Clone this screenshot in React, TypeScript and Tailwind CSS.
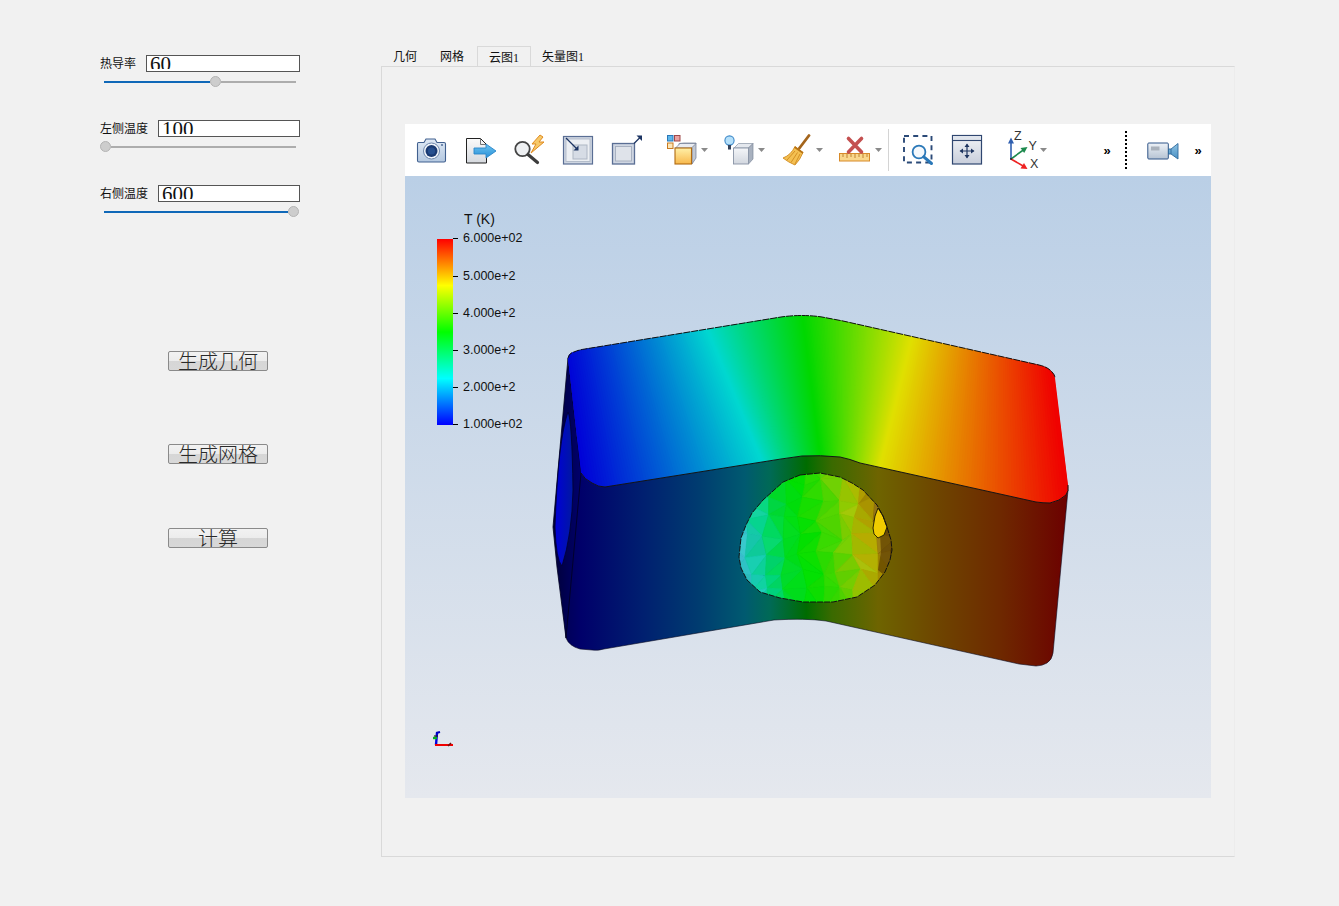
import React from "react";

const lerp = (a: number, b: number, t: number) => a + (b - a) * t;
type C = [number, number, number];
const ramp = (stops: [number, C][], t: number): string => {
  const v = Math.max(stops[0][0], Math.min(stops[stops.length - 1][0], t));
  for (let i = 0; i < stops.length - 1; i++) {
    const [a, ca] = stops[i];
    const [b, cb] = stops[i + 1];
    if (v <= b) {
      const k = (v - a) / (b - a);
      return `rgb(${Math.round(lerp(ca[0], cb[0], k))},${Math.round(lerp(ca[1], cb[1], k))},${Math.round(lerp(ca[2], cb[2], k))})`;
    }
  }
  return "rgb(0,0,0)";
};

const topStops: [number, C][] = [
  [0, [0, 0, 216]],
  [0.25, [0, 216, 208]],
  [0.5, [0, 216, 0]],
  [0.75, [224, 224, 0]],
  [1, [240, 0, 0]],
];
const isoAnchors: [number, number, number][] = [
  [0, 558, 587],
  [0.25, 699, 782],
  [0.5, 802, 827],
  [0.75, 919, 869],
  [1, 1044, 1069],
];
const topStrips = () => {
  const out: { pts: string; fill: string }[] = [];
  for (let s = 0; s < 4; s++) {
    const [t0, a0, b0] = isoAnchors[s];
    const [t1, a1, b1] = isoAnchors[s + 1];
    const n = 70;
    for (let i = 0; i < n; i++) {
      const k0 = i / n;
      const k1 = (i + 1) / n;
      const x0 = lerp(a0, a1, k0);
      const x1 = lerp(a0, a1, k1) + 2;
      const x2 = lerp(b0, b1, k1) + 2;
      const x3 = lerp(b0, b1, k0);
      out.push({
        pts: `${x0},310 ${x1},310 ${x2},510 ${x3},510`,
        fill: ramp(topStops, lerp(t0, t1, (k0 + k1) / 2)),
      });
    }
  }
  return out;
};

const holeStops: [number, C][] = [
  [730, [70, 190, 215]],
  [748, [30, 205, 190]],
  [765, [0, 215, 130]],
  [785, [0, 220, 40]],
  [805, [0, 225, 0]],
  [835, [80, 215, 0]],
  [855, [160, 200, 0]],
  [870, [185, 170, 0]],
  [884, [150, 115, 0]],
  [895, [90, 60, 0]],
];
const hash = (a: number, b: number) => {
  const v = Math.sin(a * 127.1 + b * 311.7) * 43758.5453;
  return v - Math.floor(v);
};
const facets = () => {
  const out: { pts: string; fill: string; o: number }[] = [];
  const v = (i: number, j: number): [number, number] => [
    730 + i * 18 + (hash(i, j) - 0.5) * 10,
    464 + j * 18 + (hash(j + 9, i + 3) - 0.5) * 10,
  ];
  for (let i = 0; i < 10; i++) {
    for (let j = 0; j < 9; j++) {
      const p = [v(i, j), v(i + 1, j), v(i + 1, j + 1), v(i, j + 1)];
      const tris = hash(i + 20, j) > 0.5 ? [[p[0], p[1], p[2]], [p[0], p[2], p[3]]] : [[p[0], p[1], p[3]], [p[1], p[2], p[3]]];
      tris.forEach((tr, n) => {
        const cx = (tr[0][0] + tr[1][0] + tr[2][0]) / 3;
        const cy = (tr[0][1] + tr[1][1] + tr[2][1]) / 3;
        const d = Math.abs(cx - 805) / 85;
        const amp = 0.012 + d * d * 0.09;
        const sx = cx < 805 ? cx - (cy - 540) * 0.12 : cx + (540 - cy) * 0.15;
        out.push({
          pts: tr.map((q) => q.join(",")).join(" "),
          fill: ramp(holeStops, sx),
          o: (hash(i * 3 + n, j * 5) - 0.5) * 2 * amp,
        });
      });
    }
  }
  return out;
};

const topPath =
  "M568,358 Q569,353 574,352 Q578,350 585,349 L781,317 Q802,314 822,317 L843,321 L1039,365 Q1048,367 1052,372 Q1055,375 1055,378 L1068,485 Q1069,491 1066,495 Q1060,501 1050,503 Q1043,503 1036,502 L860,463 Q850,459 840,457 Q820,455 802,456 L781,459 L605,487 Q598,487 592,483 Q584,479 581,473 Z";
const frontPath =
  "M578,440 L802,430 L1060,470 L1068,490 L1053,653 Q1052,660 1047,663 Q1042,666 1036,666 L1019,664 L826,621 Q805,618 774,620 L604,649 Q598,651 592,650 L580,649 Q569,646 566,638 L560,560 Z";
const sidePath = "M568,358 L581,473 L566,638 L557,567 L553,527 Z";
const holePath =
  "M800,475 L820,473 L840,477 L852,483 L863,490 L877,505 L883,516 L887,527 L891,540 L892,550 L890,560 L885,572 L875,585 L857,597 L833,602 L803,602 L780,598 L760,592 L747,580 L741,568 L739,557 L741,538 L746,525 L752,513 L763,500 L783,482 Z";

const Model = () => (
  <svg viewBox="405 176 806 622" className="absolute inset-0 w-[806px] h-[622px]">
    <defs>
      <clipPath id="topClip"><path d={topPath} /></clipPath>
      <clipPath id="holeClip"><path d={holePath} /></clipPath>
      <linearGradient id="front" gradientUnits="userSpaceOnUse" x1="555" y1="0" x2="1068" y2="0">
        <stop offset="0" stopColor="#00004c" />
        <stop offset="0.05" stopColor="#00006a" />
        <stop offset="0.17" stopColor="#001f70" />
        <stop offset="0.28" stopColor="#003c70" />
        <stop offset="0.37" stopColor="#005a70" />
        <stop offset="0.42" stopColor="#006a55" />
        <stop offset="0.49" stopColor="#006c00" />
        <stop offset="0.54" stopColor="#3a6a00" />
        <stop offset="0.63" stopColor="#6e6400" />
        <stop offset="0.75" stopColor="#6e4400" />
        <stop offset="0.87" stopColor="#6e2800" />
        <stop offset="1" stopColor="#6c0000" />
      </linearGradient>
      <linearGradient id="side" gradientUnits="userSpaceOnUse" x1="553" y1="0" x2="581" y2="0">
        <stop offset="0" stopColor="#000038" />
        <stop offset="1" stopColor="#00006c" />
      </linearGradient>
      <linearGradient id="sideHole" gradientUnits="userSpaceOnUse" x1="555" y1="0" x2="573" y2="0">
        <stop offset="0" stopColor="#0000d8" />
        <stop offset="1" stopColor="#0018a0" />
      </linearGradient>
    </defs>
    <path d={frontPath} fill="url(#front)" stroke="#0a0a20" strokeWidth="0.6" />
    <path d={sidePath} fill="url(#side)" stroke="#000020" strokeWidth="0.8" />
    <path d="M568,412 Q572,420 573,490 Q572,535 562,566 Q556,560 555,527 Q558,440 568,412 Z" fill="url(#sideHole)" stroke="#000030" strokeWidth="0.8" />
    <g clipPath="url(#topClip)">
      <rect x="540" y="300" width="60" height="220" fill="rgb(0,0,216)" />
      <rect x="1030" y="300" width="60" height="220" fill="rgb(240,0,0)" />
      {topStrips().map((s, i) => (
        <polygon key={i} points={s.pts} fill={s.fill} />
      ))}
    </g>
    <path d="M568,358 Q569,353 574,352 Q578,350 585,349 L781,317 Q802,314 822,317 L843,321 L1039,365 Q1048,367 1052,372 Q1055,375 1055,378" fill="none" stroke="#111" strokeWidth="1" strokeDasharray="7 1" />
    <path d="M581,473 Q584,479 592,483 Q598,487 605,487 L781,459 L802,456 Q820,455 840,457 Q850,459 860,463 L1036,502 Q1043,503 1050,503 Q1060,501 1066,495 Q1069,491 1068,485" fill="none" stroke="#141414" strokeWidth="1" />
    <g clipPath="url(#holeClip)">
      {facets().map((f, i) => (
        <g key={i}>
          <polygon points={f.pts} fill={f.fill} stroke={f.fill} strokeWidth="0.7" />
          <polygon points={f.pts} fill={f.o > 0 ? "#ffffff" : "#000000"} opacity={Math.abs(f.o)} />
        </g>
      ))}
      <path d="M880,534 L886,524 L893,540 L893,565 L884,575 L878,570 L881,552 Z" fill="#5a3c00" opacity="0.65" />
    </g>
    <path d="M878,508 L883,516 L887,527 L884,535 L878,538 L874,534 L873,528 L875,516 Z" fill="#f0cc00" stroke="#1a1a00" strokeWidth="0.9" />
    <path d={holePath} fill="none" stroke="#111" strokeWidth="1" strokeDasharray="6 1" />
    <path d="M436,745 L437,733" stroke="#0000e0" strokeWidth="2.4" fill="none" />
    <path d="M436,733 L440,732" stroke="#0000c0" strokeWidth="2" fill="none" />
    <path d="M433,738 L437,738" stroke="#00b020" strokeWidth="2.4" fill="none" />
    <path d="M434,736 L438,736" stroke="#222" strokeWidth="1.2" fill="none" />
    <path d="M435,745 L453,745" stroke="#f00000" strokeWidth="2" fill="none" />
    <path d="M448,746 L451,743" stroke="#701010" strokeWidth="1.6" fill="none" />
  </svg>
);

const Caret = ({ className }: { className: string }) => (
  <svg viewBox="0 0 7 4" className={className}>
    <path d="M0,0 H7 L3.5,4 Z" fill="#8a8a8a" />
  </svg>
);

const box = "shrink-0 w-[32px] h-[32px]";

const IconCamera = () => (
  <svg viewBox="0 0 32 32" className={box}>
    <defs>
      <linearGradient id="camB" x1="0" y1="0" x2="0" y2="1">
        <stop offset="0" stopColor="#dfe9f5" />
        <stop offset="1" stopColor="#b4c8e0" />
      </linearGradient>
    </defs>
    <path d="M3.5,8.5 H9 L11,5 H20 L22,8.5 H29 Q30.5,8.5 30.5,10 V26.5 Q30.5,28 29,28 H4 Q2.5,28 2.5,26.5 V10 Q2.5,8.5 3.5,8.5 Z" fill="url(#camB)" stroke="#41608f" strokeWidth="1.1" />
    <circle cx="16.5" cy="17" r="8" fill="#f2f6fb" stroke="#6d86ab" strokeWidth="1" />
    <circle cx="16.5" cy="17" r="6" fill="#1a3a72" />
    <circle cx="16.5" cy="17" r="3.6" fill="#27508f" />
    <circle cx="27" cy="11" r="0.9" fill="#41608f" />
  </svg>
);

const IconSave = () => (
  <svg viewBox="0 0 32 32" className={box}>
    <defs>
      <linearGradient id="savB" x1="0" y1="0" x2="0" y2="1">
        <stop offset="0" stopColor="#fafafa" />
        <stop offset="1" stopColor="#d6d9de" />
      </linearGradient>
      <linearGradient id="savA" x1="0" y1="0" x2="0" y2="1">
        <stop offset="0" stopColor="#6cc4f0" />
        <stop offset="1" stopColor="#2a90d8" />
      </linearGradient>
    </defs>
    <path d="M1.5,4.5 H15.5 L21.5,10.5 V29 H1.5 Z" fill="url(#savB)" stroke="#222" strokeWidth="1" />
    <path d="M15.5,4.5 V10.5 H21.5" fill="none" stroke="#555" strokeWidth="0.8" />
    <path d="M9,14 H21 V10 L31,17 L21,24 V20 H9 Z" fill="url(#savA)" stroke="#2a86c8" strokeWidth="0.9" />
  </svg>
);

const IconMagBolt = () => (
  <svg viewBox="0 0 32 32" className={box}>
    <path d="M27,1 L19,10 H23 L18,19 L31,8 H26 L30,3 Z" fill="#f6c96a" stroke="#e08a20" strokeWidth="1" strokeLinejoin="round" />
    <circle cx="9.5" cy="15" r="7.2" fill="#eef0f2" stroke="#444" strokeWidth="1.8" />
    <path d="M15,20.5 L24.5,28.5" stroke="#3d3d3d" strokeWidth="3.2" strokeLinecap="round" />
  </svg>
);

const IconReset = () => (
  <svg viewBox="0 0 32 32" className={box}>
    <rect x="1.5" y="2.5" width="29" height="27.5" fill="#cfd6e2" stroke="#5a6e94" strokeWidth="1.2" />
    <rect x="4" y="5" width="24" height="22.5" fill="#eceff3" stroke="#aab3c2" strokeWidth="0.8" />
    <rect x="11" y="11" width="14" height="14" fill="#d6dce5" stroke="#aeb7c4" strokeWidth="1" />
    <path d="M4,4 L15,15" stroke="#1d3563" strokeWidth="1.3" />
    <path d="M16.5,11.5 V16.5 H11.5 Z" fill="#1d3563" />
  </svg>
);

const IconBoxArrow = () => (
  <svg viewBox="0 0 32 32" className={box}>
    <rect x="1.5" y="9.5" width="22" height="20.5" fill="#cfd6e2" stroke="#5a6e94" strokeWidth="1.3" />
    <rect x="4.5" y="12.5" width="16" height="14.5" fill="#dfe3ea" stroke="#a4adbd" strokeWidth="0.9" />
    <path d="M23,9.5 L30,2.5" stroke="#1d3563" strokeWidth="1.3" />
    <path d="M25.5,1.5 H31 V7 Z" fill="#1d3563" />
  </svg>
);

const IconColorCube = () => (
  <svg viewBox="0 0 32 32" className={box}>
    <defs>
      <linearGradient id="ccF" x1="0" y1="0" x2="0" y2="1">
        <stop offset="0" stopColor="#fff0a8" />
        <stop offset="1" stopColor="#f8b84c" />
      </linearGradient>
    </defs>
    <rect x="1.5" y="1.5" width="5.5" height="5.5" fill="#5eb6ea" stroke="#2a78b8" />
    <rect x="8.5" y="1.5" width="5.5" height="5.5" fill="#e8a0a0" stroke="#a04848" />
    <rect x="1.5" y="9" width="5.5" height="5.5" fill="#fbe6b8" stroke="#c87a20" />
    <path d="M13,9.5 L18,9 H30 V24 L26,30 V14 H13 Z" fill="#c0c7d2" stroke="#6d7a90" strokeWidth="0.7" />
    <path d="M9.5,14 L14,9.5 H30 L25.5,14 Z" fill="#e9ecf1" stroke="#6d7a90" strokeWidth="0.7" />
    <rect x="9" y="14" width="16.5" height="16" fill="url(#ccF)" stroke="#b06a12" strokeWidth="1.1" />
  </svg>
);

const IconLightCube = () => (
  <svg viewBox="0 0 32 32" className={box}>
    <defs>
      <linearGradient id="lcF" x1="0" y1="0" x2="0" y2="1">
        <stop offset="0" stopColor="#f4f6f9" />
        <stop offset="1" stopColor="#d2d7df" />
      </linearGradient>
    </defs>
    <path d="M11,14 L15.5,9.5 H30 L25.5,14 Z" fill="#e4e8ee" stroke="#8893a5" strokeWidth="0.7" />
    <path d="M25.5,14 L30,9.5 V25 L25.5,30 Z" fill="#a8b1bf" stroke="#7f8a9c" strokeWidth="0.7" />
    <rect x="10.5" y="14" width="15" height="16" fill="url(#lcF)" stroke="#8893a5" strokeWidth="0.9" />
    <circle cx="6.5" cy="6.5" r="4.6" fill="#b5e0fa" stroke="#3d88c8" strokeWidth="1.1" />
    <rect x="5" y="11" width="3" height="4.5" fill="#33415a" />
  </svg>
);

const IconBroom = () => (
  <svg viewBox="0 0 32 32" className={box}>
    <path d="M16,16 L27,1.5" stroke="#a4651c" strokeWidth="2.8" strokeLinecap="round" />
    <path d="M1,24 Q9,21 13,12.5 L21,18.5 Q18,26 13,31 Q6,28 1,24 Z" fill="#f4c052" stroke="#cf8a1f" strokeWidth="0.9" />
    <path d="M5,26 L13,17 M9,28.5 L15.5,18.5 M13,30 L18,20" stroke="#cf8a1f" strokeWidth="0.9" />
    <path d="M12.5,13 L21,19" stroke="#b97414" strokeWidth="1.6" />
  </svg>
);

const IconRuler = () => (
  <svg viewBox="0 0 32 32" className={box}>
    <rect x="1.5" y="19.5" width="30" height="7.5" fill="#f9d78c" stroke="#d88a28" strokeWidth="1" />
    <path d="M5,20 V23 M9,20 V24 M13,20 V23 M17,20 V24 M21,20 V23 M25,20 V24 M29,20 V23" stroke="#b87a28" strokeWidth="0.9" />
    <path d="M10.5,4.5 L23.5,18 M23.5,4.5 L10.5,18" stroke="#c45050" strokeWidth="3.6" strokeLinecap="round" />
  </svg>
);

const IconZoomBox = () => (
  <svg viewBox="0 0 32 32" className={box}>
    <rect x="2" y="2" width="27.5" height="26.5" fill="none" stroke="#2b4a78" strokeWidth="1.9" strokeDasharray="5 4.2" />
    <circle cx="17" cy="18" r="6.4" fill="#f4f8fc" stroke="#2a78b8" strokeWidth="1.8" />
    <path d="M21.8,22.8 L29.5,29.5" stroke="#2a78b8" strokeWidth="3" strokeLinecap="round" />
  </svg>
);

const IconFull = () => (
  <svg viewBox="0 0 32 32" className={box}>
    <defs>
      <linearGradient id="fuB" x1="0" y1="0" x2="0" y2="1">
        <stop offset="0" stopColor="#f2f4f7" />
        <stop offset="1" stopColor="#c8cedb" />
      </linearGradient>
    </defs>
    <rect x="1.5" y="1.5" width="29" height="28.5" fill="url(#fuB)" stroke="#2f4670" strokeWidth="1.2" />
    <rect x="2" y="2" width="28" height="4.5" fill="#dfe4ec" />
    <path d="M1.5,6.5 H30.5" stroke="#2f4670" strokeWidth="1.1" />
    <path d="M16,10.5 V23.5 M9.5,17 H22.5" stroke="#1e3560" strokeWidth="1.2" />
    <path d="M16,9.5 L13.5,13 H18.5 Z M16,24.5 L13.5,21 H18.5 Z M8.5,17 L12,14.5 V19.5 Z M23.5,17 L20,14.5 V19.5 Z" fill="#1e3560" />
  </svg>
);

const IconAxes = () => (
  <svg viewBox="0 0 33 40" className="shrink-0 w-[33px] h-[40px]">
    <path d="M5,29 V11" stroke="#2f5fb0" strokeWidth="1.6" />
    <path d="M5,7.5 L2,13.5 H8 Z" fill="#2f5fb0" />
    <path d="M5,29 L18,19.5" stroke="#1e8a4e" strokeWidth="1.6" />
    <path d="M21.5,17 L14.5,18 L18.2,23 Z" fill="#1e8a4e" />
    <path d="M5,29 L18,36.5" stroke="#ee2222" strokeWidth="1.6" />
    <path d="M21.5,39 L14.5,38.5 L18,33 Z" fill="#ee2222" />
    <circle cx="5" cy="29" r="1" fill="#222" />
    <text x="8" y="9.5" fontSize="12.5" fontFamily="Liberation Sans" fill="#333">Z</text>
    <text x="22.5" y="20" fontSize="12.5" fontFamily="Liberation Sans" fill="#333">Y</text>
    <text x="24" y="37.5" fontSize="12.5" fontFamily="Liberation Sans" fill="#333">X</text>
  </svg>
);

const IconVideo = () => (
  <svg viewBox="0 0 32 32" className={box}>
    <defs>
      <linearGradient id="viB" x1="0" y1="0" x2="0" y2="1">
        <stop offset="0" stopColor="#eef2f7" />
        <stop offset="1" stopColor="#b6c3d3" />
      </linearGradient>
      <linearGradient id="viL" x1="0" y1="0" x2="0" y2="1">
        <stop offset="0" stopColor="#8fc4e4" />
        <stop offset="1" stopColor="#4a90c4" />
      </linearGradient>
    </defs>
    <rect x="0.8" y="9" width="20.5" height="16" rx="1" fill="url(#viB)" stroke="#2f5588" strokeWidth="1" />
    <rect x="4" y="12.5" width="8.5" height="4" fill="#a9b1bb" />
    <path d="M21.5,15 L24,15 L31,9.5 V25 L24,20 H21.5 Z" fill="url(#viL)" stroke="#2f6a9c" strokeWidth="0.9" />
    <path d="M24,15 V20" stroke="#2f6a9c" strokeWidth="0.9" />
  </svg>
);

const More = ({ className }: { className: string }) => (
  <span className={`shrink-0 w-[8px] text-center text-[13px] leading-none font-bold text-black ${className}`} style={{ fontFamily: "'Liberation Sans', sans-serif" }}>»</span>
);

const ValueField = ({ w, value, ml }: { w: string; value: string; ml: string }) => (
  <div className={`${w} ${ml} h-[17px] bg-white border border-[#555555] overflow-hidden`}>
    <div className="h-[13px] overflow-hidden pl-[3px] text-[21px] leading-[17px] text-[#111111]" style={{ fontFamily: "'Liberation Serif', serif" }}>{value}</div>
  </div>
);

const Label = ({ children }: { children: React.ReactNode }) => (
  <span className="shrink-0 text-[12px] leading-[16px] text-[#111111]" style={{ fontFamily: "'Noto Sans CJK SC', sans-serif" }}>{children}</span>
);

const Thumb = () => <div className="shrink-0 w-[11px] h-[11px] rounded-full bg-[#cdcdcd] border border-[#b4b4b4]" />;

const CmdButton = ({ children, className }: { children: React.ReactNode; className: string }) => (
  <div className={`w-[100px] h-[20px] ml-[68px] rounded-[2px] border border-[#8a8a8a] overflow-hidden flex items-center justify-center bg-[linear-gradient(#f2f2f2_0%,#ececec_50%,#d6d6d6_50%,#d8d8d8_100%)] text-[20px] leading-[18px] font-light text-[#2a2a2a] whitespace-nowrap ${className}`} style={{ fontFamily: "'Noto Sans CJK SC', sans-serif" }}>
    {children}
  </div>
);

const ticks = ["6.000e+02", "5.000e+2", "4.000e+2", "3.000e+2", "2.000e+2", "1.000e+02"];

export default function App() {
  return (
    <div className="w-[1339px] h-[906px] bg-[#f1f1f1] flex overflow-hidden">
      <div className="w-[381px] shrink-0 pt-[55px] pl-[100px]">
        <div className="flex w-[200px]">
          <Label>热导率</Label>
          <ValueField w="w-[154px]" ml="ml-[10px]" value="60" />
        </div>
        <div className="flex items-center w-[192px] h-[11px] mt-[4px] ml-[4px]">
          <div className="w-[106px] h-[2px] bg-[#0f68b8]" />
          <Thumb />
          <div className="flex-1 h-[2px] bg-[#adadad]" />
        </div>

        <div className="flex w-[200px] mt-[33px]">
          <Label>左侧温度</Label>
          <ValueField w="w-[142px]" ml="ml-[10px]" value="100" />
        </div>
        <div className="flex items-center w-[196px] h-[11px] mt-[4px] ml-0">
          <Thumb />
          <div className="flex-1 h-[2px] bg-[#adadad]" />
        </div>

        <div className="flex w-[200px] mt-[33px]">
          <Label>右侧温度</Label>
          <ValueField w="w-[142px]" ml="ml-[10px]" value="600" />
        </div>
        <div className="flex items-center w-[195px] h-[11px] mt-[4px] ml-[4px]">
          <div className="w-[184px] h-[2px] bg-[#0f68b8]" />
          <Thumb />
        </div>

        <CmdButton className="mt-[134px]">生成几何</CmdButton>
        <CmdButton className="mt-[73px]">生成网格</CmdButton>
        <CmdButton className="mt-[64px]">计算</CmdButton>
      </div>

      <div className="w-[854px] shrink-0 pt-[46px]">
        <div className="flex h-[20px] text-[12px] leading-[23px] text-[#111111]" style={{ fontFamily: "'Liberation Serif', 'Noto Sans CJK SC', serif" }}>
          <div className="pl-3 pr-[11px]">几何</div>
          <div className="pl-3 pr-[13px]">网格</div>
          <div className="px-[11px] border-x border-t border-[#d9d9d9]">云图1</div>
          <div className="pl-[11px] pr-3">矢量图1</div>
        </div>
        <div className="h-[791px] border border-[#d9d9d9] border-r-[#ececec] pt-[57px] pl-[23px]">
          <div className="w-[806px] h-[674px] flex flex-col">
            <div className="h-[52px] bg-white flex items-center pl-[10px]">
              <IconCamera />
              <div className="shrink-0 ml-[18px]"><IconSave /></div>
              <div className="shrink-0 ml-[16px]"><IconMagBolt /></div>
              <div className="shrink-0 ml-[17px]"><IconReset /></div>
              <div className="shrink-0 ml-[17px]"><IconBoxArrow /></div>
              <div className="shrink-0 ml-[23px]"><IconColorCube /></div>
              <Caret className="shrink-0 w-[7px] h-[4px] ml-[3px]" />
              <div className="shrink-0 ml-[15px]"><IconLightCube /></div>
              <Caret className="shrink-0 w-[7px] h-[4px] ml-[3px]" />
              <div className="shrink-0 ml-[17px]"><IconBroom /></div>
              <Caret className="shrink-0 w-[7px] h-[4px] ml-[2px]" />
              <div className="shrink-0 ml-[15px]"><IconRuler /></div>
              <Caret className="shrink-0 w-[7px] h-[4px] ml-[5px]" />
              <div className="shrink-0 ml-[6px] w-px h-[42px] bg-[#d4d4d4]" />
              <div className="shrink-0 ml-[13px]"><IconZoomBox /></div>
              <div className="shrink-0 ml-[17px]"><IconFull /></div>
              <div className="shrink-0 ml-[23px]"><IconAxes /></div>
              <Caret className="shrink-0 w-[7px] h-[4px] ml-[1px]" />
              <More className="ml-[56px]" />
              <div className="shrink-0 ml-[14px] h-[38px] border-l-2 border-dotted border-black" />
              <div className="shrink-0 ml-[20px]"><IconVideo /></div>
              <More className="ml-[15px]" />
            </div>
            <div className="relative h-[622px] bg-[linear-gradient(#bacfe6,#e5e8ee)] overflow-hidden">
              <Model />
              <div className="absolute left-[32px] top-[35px] text-[#111111]" style={{ fontFamily: "'Liberation Sans', sans-serif" }}>
                <div className="ml-[27px] text-[14px] leading-[16px]">T (K)</div>
                <div className="flex mt-[4px]">
                  <div className="w-[16px] h-[186px] mt-[8px] bg-[linear-gradient(to_bottom,#ff0000_0%,#ffff00_25%,#00ff00_50%,#00ffff_75%,#0000ff_100%)]" />
                  <div className="h-[200px] flex flex-col gap-[23px]">
                    {ticks.map((t) => (
                      <div key={t} className="h-[14px] shrink-0 flex items-center whitespace-nowrap text-[12.5px] leading-[14px] first:mb-[1px]">
                        <div className="w-[5px] h-px bg-black mr-[5px]" />
                        {t}
                      </div>
                    ))}
                  </div>
                </div>
              </div>
            </div>
          </div>
        </div>
      </div>
    </div>
  );
}
